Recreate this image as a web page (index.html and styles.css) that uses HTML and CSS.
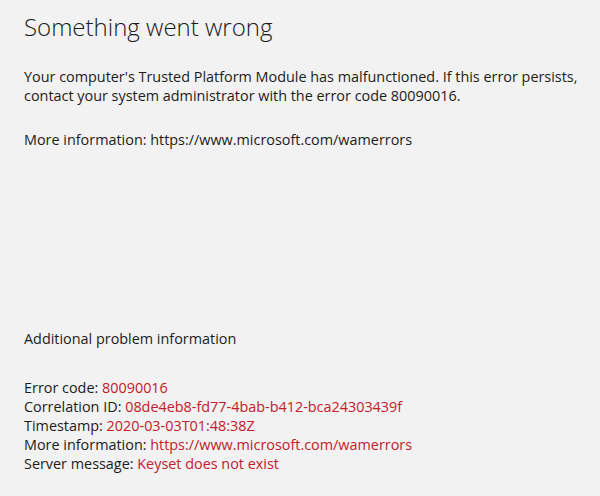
FILE: index.html
```html
<!DOCTYPE html>
<html lang="en">
<head>
<meta charset="utf-8">
<title>Something went wrong</title>
<link rel="stylesheet" href="styles.css">
</head>
<body>
<main class="page">
  <h1 class="title">Something went wrong</h1>
  <p class="message">Your computer's Trusted Platform Module has malfunctioned. If this error persists, contact your system administrator with the error code 80090016.</p>
  <p class="more">More information: https://www.microsoft.com/wamerrors</p>
  <h2 class="subtitle">Additional problem information</h2>
  <ul class="details">
    <li>Error code: <span class="val">80090016</span></li>
    <li>Correlation ID: <span class="val">08de4eb8-fd77-4bab-b412-bca24303439f</span></li>
    <li>Timestamp: <span class="val">2020-03-03T01:48:38Z</span></li>
    <li>More information: <span class="val">https://www.microsoft.com/wamerrors</span></li>
    <li>Server message: <span class="val">Keyset does not exist</span></li>
  </ul>
</main>
</body>
</html>
```

FILE: styles.css
```css
html, body {
  margin: 0;
  padding: 0;
  background: #f2f2f2;
}
body {
  font-family: "Open Sans", "Noto Sans", "Liberation Sans", sans-serif;
  color: #1c1c1c;
  width: 600px;
  height: 496px;
  overflow: hidden;
}
.page {
  padding: 11px 0 0 24px;
}
.title {
  margin: 0;
  font-size: 24px;
  font-weight: 300;
  line-height: 32px;
  color: #1a1a1a;
}
.message, .more, .subtitle, .details {
  font-size: 14.4px;
  line-height: 19px;
  font-weight: 400;
}
.message {
  margin: 24px 0 0;
  width: 576px;
}
.more {
  margin: 25px 0 0;
}
.subtitle {
  margin: 180px 0 0;
}
.details {
  list-style: none;
  padding: 0;
  margin: 30px 0 0;
}
.val {
  color: #c1202b;
}
```
